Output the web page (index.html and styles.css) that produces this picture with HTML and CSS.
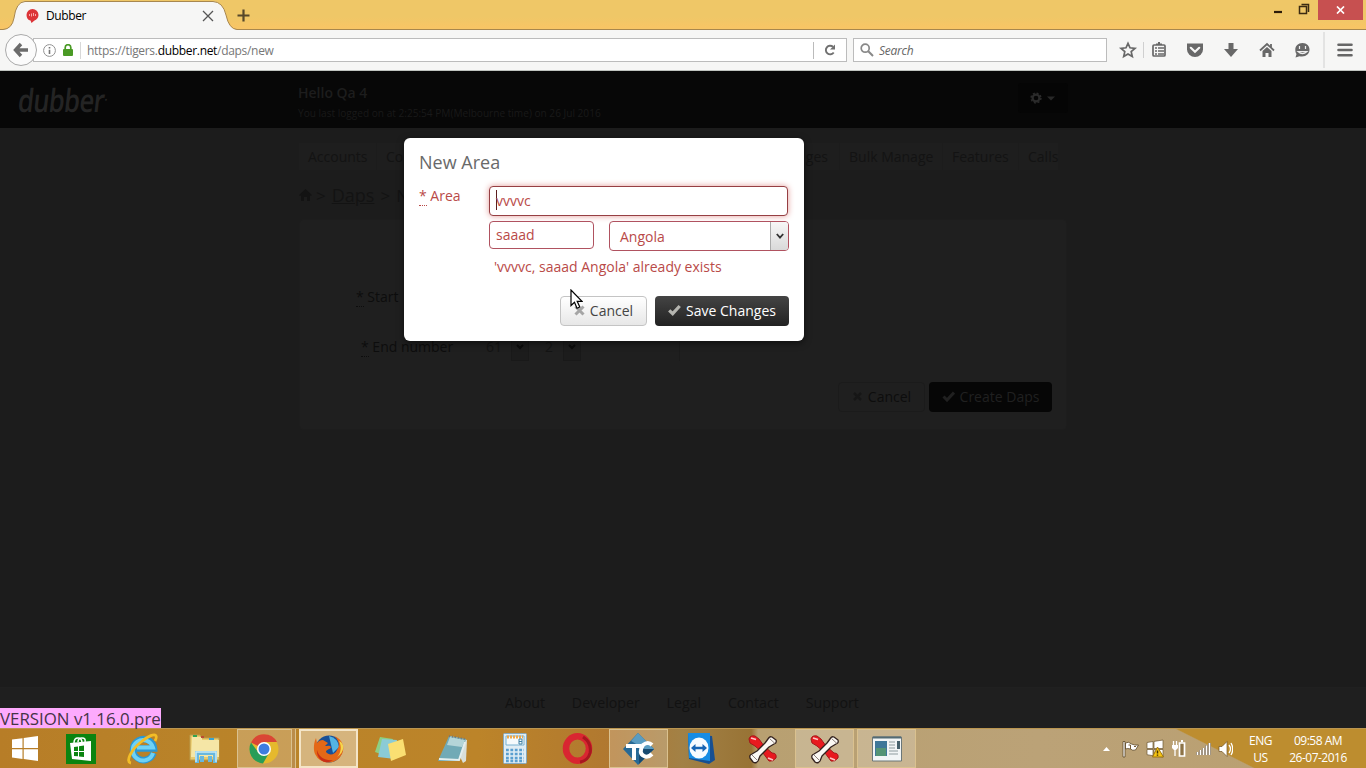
FILE: index.html
```html
<!DOCTYPE html>
<html lang="en">
<head>
<meta charset="utf-8">
<title>Dubber</title>
<link rel="stylesheet" href="styles.css">
</head>
<body>
<div class="screen">
  <header class="tabs">
    <svg class="tab-shape" width="260" height="31" viewBox="0 0 260 31"><path d="M0 29.5H3Q12 29 14 18Q16 2 25 1.500H213Q223 2 226 15Q229 29 237 29.500H260V31H0Z" fill="#f6f6f5"/><path d="M0 29.500H3Q12 29 14 18Q16 2 25 1.500H213Q223 2 226 15Q229 29 237 29.500H260" fill="none" stroke="#a8874e"/></svg>
    <div class="tab">
      <svg width="13" height="14" viewBox="0 0 13 14"><path d="M6.500 0a6 6 0 0 1 6 6c0 3-2 4.500-4 5.600L5.500 14 4.500 11.600C2 11 .5 9 .5 6a6 6 0 0 1 6-6Z" fill="#dc3438"/><path d="M3.500 5v2M5.500 4.500v3M7.500 4v3M9.500 5v2" stroke="#f9a9a9"/></svg>
      <span class="tab-title">Dubber</span>
      <svg class="tab-close" width="12" height="12" viewBox="0 0 12 12"><path d="M1 1l10 10M11 1L1 11" stroke="#555" stroke-width="1.300"/></svg>
      <svg class="tab-new" width="13" height="13" viewBox="0 0 13 13"><path d="M6.500 .5v12M.5 6.500h12" stroke="#57482a" stroke-width="2.200"/></svg>
    </div>
    <div class="window-controls">
      <svg width="36" height="20" viewBox="0 0 36 20"><path d="M0 12h8" stroke="#2c1b08" stroke-width="2.200"/><path d="M25.500 6.500h7v7h-7zM27.500 4.500h7V12" fill="none" stroke="#3b2b12" stroke-width="1.500"/></svg>
      <div class="close"><svg width="9" height="8" viewBox="0 0 9 8"><path d="M1 .5l7 7M8 .5l-7 7" stroke="#fff" stroke-width="1.700"/></svg></div>
    </div>
  </header>

  <div class="toolbar">
    <div class="back"><svg width="16" height="16" viewBox="0 0 16 16"><path d="M15 8H3M8 2L2.500 8 8 14" fill="none" stroke="#6b6b6b" stroke-width="3.400"/></svg></div>
    <div class="urlbar">
      <svg width="13" height="13" viewBox="0 0 13 13"><circle cx="6.500" cy="6.500" r="5.900" fill="none" stroke="#929292"/><path d="M6.500 5.700V10M6.500 3v1.500" stroke="#777" stroke-width="1.600"/></svg>
      <svg class="lock" width="10" height="12" viewBox="0 0 10 12"><path d="M2.200 6V3.500a2.800 2.800 0 0 1 5.600 0V6" fill="none" stroke="#4a9a25" stroke-width="1.700"/><rect y="5" width="10" height="7" rx="1" fill="#4a9a25"/></svg>
      <span class="url">https://tigers.<b>dubber.net</b>/daps/new</span>
      <div class="reload"><svg width="12" height="12" viewBox="0 0 12 12"><path d="M9.700 8.500A4.300 4.300 0 1 1 9 2.800" fill="none" stroke="#707070" stroke-width="1.900"/><path d="M11 .5v5H6z" fill="#707070"/></svg></div>
    </div>
    <div class="search">
      <svg width="14" height="14" viewBox="0 0 14 14"><circle cx="5.200" cy="5.200" r="4" fill="none" stroke="#888" stroke-width="1.700"/><path d="M8.300 8.300L13 13" stroke="#888" stroke-width="2"/></svg>
      <span>Search</span>
    </div>
    <svg class="tools" width="259" height="36" viewBox="1107 32 259 36">
      <path d="M1128 43.300l2 4.500 5 .5-3.800 3.300 1.100 4.900-4.300-2.600-4.300 2.600 1.100-4.900-3.800-3.300 5-.5z" fill="none" stroke="#686868" stroke-width="1.700"/>
      <path d="M1143.500 42v16M1324 32v36" stroke="#d0d0d0" fill="none"/>
      <rect x="1153" y="45" width="12" height="11" rx="1" fill="none" stroke="#686868" stroke-width="1.700"/><path d="M1156 45v-1.500h2V42h2v1.500h2V45" fill="#686868"/><path d="M1155 48h2m1 0h6M1155 51h2m1 0h6M1155 54h2m1 0h6" stroke="#686868" stroke-width="1.300"/>
      <path d="M1187 43.500h16v6a8 7.500 0 0 1-16 0z" fill="#686868"/><path d="M1190.800 47.800l4.200 4 4.200-4" fill="none" stroke="#f6f6f5" stroke-width="2.200" stroke-linecap="round"/>
      <path d="M1228.500 43h5v6h4.500l-7 8-7-8h4.500z" fill="#686868"/>
      <path d="M1260 50.500l7-6.500 7 6.500M1271 44v4" fill="none" stroke="#686868" stroke-width="1.800"/><path d="M1262.500 51l4.500-4 4.500 4v6h-3v-4h-3v4h-3z" fill="#686868"/>
      <path d="M1302.500 43c4.500 0 7 3.200 7 6.500 0 4-3 7-7.500 7-1 0-2 0-2.500-.2L1295.500 57.500l1-3.500c-1-1-1.200-3-1.200-4.500 0-3.300 2.700-6.500 7.200-6.500Z" fill="#686868"/><path d="M1299.500 46v3M1305.500 46v3M1298 51.500h9q-4.500 4-9 0z" fill="#686868" stroke="#eee" stroke-width="1.200"/>
      <path d="M1338.500 44.800h13M1338.500 50h13M1338.500 55.200h13" stroke="#666" stroke-width="2.600" stroke-linecap="round"/>
    </svg>
  </div>

  <main class="page">
    <div class="site-header">
      <div class="logo">dubber<small>·</small></div>
      <div class="welcome"><h4>Hello Qa 4</h4><p>You last logged on at 2:25:54 PM(Melbourne time) on 26 Jul 2016</p></div>
      <div class="gear"><svg width="27" height="12" viewBox="0 0 27 12"><circle cx="6" cy="6" r="3.400" fill="none" stroke="#2b2b2b" stroke-width="2.200"/><circle cx="6" cy="6" r="4.900" fill="none" stroke="#2b2b2b" stroke-width="1.500" stroke-dasharray="2 1.850"/><path d="M17 4.500h8l-4 4z" fill="#282828"/></svg></div>
    </div>
    <div class="content">
      <nav class="nav"><span class="n1">Accounts</span><span class="n2">Co</span><span class="n3">ges</span><span class="n4">Bulk Manage</span><span class="n5">Features</span><span class="n6">Calls</span></nav>
      <div class="crumbs"><svg width="13" height="12" viewBox="0 0 13 12"><path d="M0 6L6.500 0 13 6l-1 1-1-.8V12H8V8H5v4H2V6.200L1 7z" fill="#131313"/></svg><span>&gt;</span><u>Daps</u><span>&gt;</span><span>N</span></div>
      <section class="panel">
        <div class="row start"><label><abbr>*</abbr> Start</label></div>
        <div class="row end"><label><abbr>*</abbr> End number</label><div class="pick">61<i><svg width="8" height="6" viewBox="0 0 8 6"><path d="M1 1l3 3 3-3" fill="none" stroke="#0b0b0b" stroke-width="2"/></svg></i></div><div class="pick">2<i><svg width="8" height="6" viewBox="0 0 8 6"><path d="M1 1l3 3 3-3" fill="none" stroke="#0b0b0b" stroke-width="2"/></svg></i></div><div class="num"></div></div>
        <div class="panel-actions"><div class="btn ghost"><svg width="11" height="11" viewBox="0 0 11 11"><path d="M2 2l7 7M9 2l-7 7" stroke="#161616" stroke-width="2.500"/></svg>Cancel</div><div class="btn create"><svg width="13" height="11" viewBox="0 0 13 11"><path d="M1.500 5.500l3.500 3.500 7-7.500" fill="none" stroke="#202020" stroke-width="3"/></svg>Create Daps</div></div>
      </section>
    </div>
    <footer class="site-footer"><span>About</span><span>Developer</span><span>Legal</span><span>Contact</span><span>Support</span></footer>
    <div class="version">VERSION v1.16.0.pre</div>

    <div class="modal">
      <h3>New Area</h3>
      <div class="form">
        <label class="area-label"><abbr>*</abbr> Area</label>
        <div class="fields">
          <div class="input focus"><i class="caret"></i>vvvvc</div>
          <div class="pair"><div class="input city">saaad</div><div class="select"><span>Angola</span><div class="arrow"><svg width="8" height="7" viewBox="0 0 8 7"><path d="M.8 1L4 4.600 7.200 1" fill="none" stroke="#333" stroke-width="1.800"/></svg></div></div></div>
          <p class="error">'vvvvc, saaad Angola' already exists</p>
        </div>
      </div>
      <div class="actions">
        <div class="btn cancel"><svg width="11" height="11" viewBox="0 0 11 11"><path d="M1.500 1.500l8 8M9.500 1.500l-8 8" stroke="#a5a5a5" stroke-width="3"/></svg>Cancel</div>
        <div class="btn save"><svg width="13" height="12" viewBox="0 0 13 12"><path d="M1.200 6.300l3.500 3.400 7-7.700" fill="none" stroke="#b5b5b0" stroke-width="3.200"/></svg>Save Changes</div>
      </div>
    </div>
    <svg class="cursor" width="13" height="21" viewBox="0 0 13 21"><path d="M1 1v15.500l3.500-3.300 2.500 6 2.800-1.200-2.600-5.700H12z" fill="#fff" stroke="#000" stroke-width="1.200"/></svg>
  </main>

  <footer class="taskbar">
    <div class="startbtn"><svg width="28" height="26" viewBox="0 0 28 26"><path d="M1 3.500l10.500-1.300V12H1zM12.700 2L27 0v12H12.700zM1 13.200h10.500V23L1 21.500zM12.700 13.200H27V25l-14.300-1.900z" fill="#fff"/></svg></div>
    <div class="task"><svg width="30" height="30" viewBox="0 0 30 30"><path fill="#0b8410" d="M0 0h30v30H0z"/><path d="M4 9l21-2v20L6 25z" fill="#fff"/><path d="M8 9q0-5 4-5t4 5M12 8q0-4 4-4t3 4" stroke="#fff" fill="none" stroke-width="1.500"/><path d="M8 13l4-.5V17H8zM13 12.300l5-.7V17h-5zM8 18h4v4.300L8 22zM13 18h5v5l-5-.6z" fill="#0b8410"/></svg></div>
    <div class="task"><svg width="32" height="32" viewBox="0 0 32 32"><path d="M26.500 20A10.500 10.500 0 1 1 27 15.500H9" fill="none" stroke="#2b98d4" stroke-width="6.500"/><path d="M26 20A10.300 10.300 0 1 1 26 14.500H10" fill="none" stroke="#6fd2f5" stroke-width="4"/><path d="M4 30C-2 29 4 17 14 9c7-6 14-9 15-6 .7 1-.5 4-1 5" fill="none" stroke="#f3bd26" stroke-width="2.800"/></svg></div>
    <div class="task"><svg width="34" height="32" viewBox="0 0 34 32"><path d="M2 5V2h10l2 3h17v22H2z" fill="#eacb6b" stroke="#b99a4c"/><path d="M4 4h10v3h17v17H3z" fill="#f5e6a6"/><path d="M5 3h4" stroke="#31a450" stroke-width="2"/><path d="M13 4h3" stroke="#bd4b34" stroke-width="2"/><path d="M21 6h5" stroke="#3aa3d0" stroke-width="2"/><path d="M9 30V20h18v10M14 29v-6M22 29v-6" fill="none" stroke="#69b8de" stroke-width="4"/><path d="M8 29V19h20v10" fill="none" stroke="#c9eaf6" stroke-width="1.500"/></svg></div>
    <div class="task boxed chrome"><svg width="30" height="30" viewBox="0 0 30 30"><circle cx="15" cy="15" r="14.500" fill="#e5b92d"/><path d="M15 15L2 8.500A14.500 14.500 0 0 1 28 8H15z" fill="#da4635"/><path d="M2 8.500A14.500 14.500 0 0 0 14 29.500L20 19l-11-1z" fill="#289d58"/><circle cx="15" cy="15" r="7" fill="#fff"/><circle cx="15" cy="15" r="5.500" fill="#3e7de0"/></svg></div>
    <div class="task boxed firefox"><svg width="32" height="32" viewBox="0 0 32 32"><circle cx="16" cy="16" r="13.500" fill="#194f96"/><path d="M16 3q9 2 10 11l-6 6" fill="#53b4e4"/><path d="M3 5l1 5q2-3 6-3l5 3-3 3c2 0 5-1 6 1-1 3-5 2-5 5 3 4 9 3 11-2 4-5 1-11-3-14 9 3 11 12 8 18a15 15 0 0 1-27 0C0 16 1 9 3 5Z" fill="#e46817"/><path d="M26 8c3 6 2 12-2 16 8-5 8-14 2-16Z" fill="#f5d54d"/><path d="M4 17c2 8 9 11 16 10-8 6-17-1-16-10Z" fill="#c82e16"/></svg></div>
    <div class="task"><svg width="34" height="30" viewBox="0 0 34 30"><path d="M6 3l13 2-4 18-14-5z" fill="#8dcf84"/><path d="M8 5l15 1-2 19-17-2z" fill="#8bcbd5"/><path d="M14 10l15-5 3 16-15 6z" fill="#fadf72"/></svg></div>
    <div class="task"><svg width="34" height="30" viewBox="0 0 34 30"><path d="M14 2l17 4-1 21-3 2z" fill="#d9dfd9"/><path d="M13 2l17 3-7 22H2z" fill="#70aab6"/><path d="M14 3l15 3-3 7-15-2z" fill="#b4d5d8"/><path d="M3 25l20 1 6-18" stroke="#e3eeee" fill="none" stroke-width="2"/><path d="M13 2l16 3" stroke="#777" stroke-dasharray="1 2" stroke-width="2"/></svg></div>
    <div class="task"><svg width="24" height="31" viewBox="0 0 24 31"><rect x=".5" y=".5" width="23" height="30" rx="1" fill="#e0edf4" stroke="#86a9bd"/><path d="M3 3h18v9H3z" fill="#f5fafc" stroke="#79b2d2"/><path d="M4 4h16" stroke="#f1a847" stroke-width="3" stroke-dasharray="2 1"/><path d="M16 6h3v5h-3zM16 8.500h3" fill="none" stroke="#4182a6"/><path d="M3 17h18M3 21h18M3 25h18M3 28h18" stroke="#5a9fd0" stroke-width="2.300" stroke-dasharray="2.800 1.600"/></svg></div>
    <div class="task"><svg width="31" height="31" viewBox="0 0 31 31"><ellipse cx="15.500" cy="15.500" rx="11.500" ry="12.200" fill="none" stroke="#d92631" stroke-width="6.500"/><path d="M21 4q9 6 7 16-2 8-10 9" fill="none" stroke="#a8171f" stroke-width="3"/></svg></div>
    <div class="task boxed"><svg width="34" height="32" viewBox="0 0 34 32"><path d="M16 0l16 16-16 16L1 16z" fill="#276995"/><path d="M16 0l16 16h-9L9 8z" fill="#5a9cc1"/><path d="M17 16h15L17 31z" fill="#184a70"/><path d="M4 13h15M12 13v14" stroke="#fff" stroke-width="4"/><path d="M30 12q-4-4-9 0-5 8 1 11 4 2 8-2" fill="none" stroke="#fff" stroke-width="4"/></svg></div>
    <div class="task"><svg width="28" height="32" viewBox="0 0 28 32"><path d="M1 1l24 2 3 24-6 4-20-5z" fill="#174f92"/><path d="M1 0h22v28L2 25z" fill="#168ce3"/><ellipse cx="12" cy="15" rx="9.500" ry="10.500" fill="#f6fbff"/><path d="M4 15l4.500-4v2.700h7V11l4.500 4-4.500 4v-2.700h-7V19z" fill="#1764b4"/></svg></div>
    <div class="task"><svg width="30" height="30" viewBox="0 0 30 30"><g stroke-linejoin="round"><path d="M1 5q1-4 6-3l4 3 5 7 8 7q5 0 4 5-3 4-7 3l-6-8-8-7-5-3z" fill="#e8191f" stroke="#a5181a"/><path d="M3 4l5 1.500M20 24l5 2" stroke="#ffc3c3" stroke-width="1.800"/><path d="M20 5q1-3 4-2l4 3q1 3-2 4l-5 3-9 9-2 5q-2 3-5 1l-3-4q-1-3 2-4l5-3 8-8z" fill="#fbf8f4" stroke="#33221e" stroke-width="1.300"/><path d="M21.500 4.500l5.500 5M4 21l5 5" stroke="#8b7f79" fill="none"/></g></svg></div>
    <div class="task boxed"><svg width="30" height="30" viewBox="0 0 30 30"><g stroke-linejoin="round"><path d="M1 5q1-4 6-3l4 3 5 7 8 7q5 0 4 5-3 4-7 3l-6-8-8-7-5-3z" fill="#e8191f" stroke="#a5181a"/><path d="M3 4l5 1.500M20 24l5 2" stroke="#ffc3c3" stroke-width="1.800"/><path d="M20 5q1-3 4-2l4 3q1 3-2 4l-5 3-9 9-2 5q-2 3-5 1l-3-4q-1-3 2-4l5-3 8-8z" fill="#fbf8f4" stroke="#33221e" stroke-width="1.300"/><path d="M21.500 4.500l5.500 5M4 21l5 5" stroke="#8b7f79" fill="none"/></g></svg></div>
    <div class="task boxed"><svg width="30" height="26" viewBox="0 0 30 26"><path d="M.5 1h29v24H.5z" fill="#f2f5f6" stroke="#6b7779"/><path d="M1 1.500h28" stroke="#536a74" stroke-width="2"/><path d="M3 5h12v15H3z" fill="#3e7799"/><path d="M4 12h10v8H4z" fill="#549475"/><path d="M17 6h6M17 9h6M17 12h6M17 15h9M17 18h9" stroke="#8e9b9e"/><path d="M25 5h3v8h-3z" fill="#46606c"/></svg></div>
    <div class="tray">
      <svg width="132" height="20" viewBox="1101 739 132 20"><path d="M1103 751l3.500-4 3.500 4z" fill="#fff"/><g stroke="#5c4727" stroke-width=".8"><path d="M1123 741.500h2V757h-2zM1125.500 743q3-2 6 1 3 1.500 7 1l-3 5q-3 1-5-1-3-1-5 0z" fill="#fff"/></g><path d="M1128.500 745h2v4M1134 746.500h2" stroke="#755b36" fill="none"/><path d="M1147 742.500l6-1v7h-6zM1154 741.400l9-1.400v8.500h-9zM1147 749.500h6v6.200l-6-1zM1154 749.500h9v7.500l-9-1.200z" fill="#fff" stroke="#6b5632" stroke-width=".7"/><path d="M1157.500 747l6 10h-11z" fill="#f6c513" stroke="#9b7310"/><path d="M1157.500 750.500v3M1157.500 754.500v1.300" stroke="#443000" stroke-width="1.500"/><path d="M1179.500 743h5v13h-5z" fill="#8d7347" stroke="#fff" stroke-width="1.700"/><path d="M1181 741h2" stroke="#fff" stroke-width="2"/><path d="M1173.500 741v4M1176.500 741v4M1175 749v7" stroke="#fff" stroke-width="1.300"/><path d="M1172 745h6v3l-2 2h-2l-2-2z" fill="#fff"/><path d="M1197.500 752v3M1200.500 750v5M1203.500 748v7M1206.500 745.500v9.500M1209.500 743v12" stroke="#645034" stroke-width="3"/><path d="M1197.500 752v3M1200.500 750v5M1203.500 748v7M1206.500 745.500v9.500M1209.500 743v12" stroke="#fff" stroke-width="1.800"/><path d="M1219 746.500h3l5-5v15l-5-5h-3z" fill="#fff" stroke="#705325" stroke-width=".7"/><path d="M1229 745q3 4 0 8M1231 743q3.500 6 0 12" fill="none" stroke="#fff" stroke-width="1.300"/></svg>
      <div class="lang"><span>ENG</span><span>US</span></div>
      <div class="clock"><span>09:58 AM</span><span>26-07-2016</span></div>
    </div>
  </footer>
</div>
</body>
</html>
```
FILE: styles.css
```css
* { box-sizing: border-box; }
body { margin: 0; font-family: "Open Sans", sans-serif; }
h3, h4, p { margin: 0; font-weight: 400; }
svg { display: block; flex: none; }
.screen { width: 1366px; height: 768px; overflow: hidden; display: flex; flex-direction: column; }

.tabs { height: 30px; flex: none; display: flex; justify-content: space-between; position: relative; background: linear-gradient(#efc767 0 17px, #f8c565 27px); border-bottom: 1px solid #a8874e; }
.tab-shape { position: absolute; left: 0; top: 0; }
.tab { position: relative; display: flex; align-items: center; padding: 2px 0 0 26px; }
.tab-title { width: 155px; padding-left: 7px; font-size: 12px; letter-spacing: -.4px; }
.tab-close { margin-left: 8px; }
.tab-new { margin-left: 23px; }
.window-controls { display: flex; padding-right: 3px; gap: 8px; }
.close { width: 45px; height: 20px; background: #c75050; display: grid; place-items: center; }

.toolbar { height: 41px; flex: none; display: flex; align-items: center; background: #f6f6f5; border-bottom: 1px solid #bfc3bf; padding-left: 5px; font-size: 12px; }
.back { z-index: 1; width: 32px; height: 32px; border: 1px solid #aaa; border-radius: 50%; background: #fbfbfb; display: grid; place-items: center; }
.urlbar { width: 814px; height: 24px; margin-left: -4px; border: 1px solid #bcbcbc; background: #fff; display: flex; align-items: center; padding-left: 9px; }
.lock { margin-left: 7px; }
.url { margin-left: 7px; padding-left: 6px; border-left: 1px solid #d8d8d8; color: #777; letter-spacing: -.31px; white-space: nowrap; }
.url b { color: #000; font-weight: 400; }
.reload { margin-left: auto; width: 33px; height: 17px; border-left: 1px solid #bbb; display: grid; place-items: center; }
.search { width: 254px; height: 24px; margin-left: 6px; border: 1px solid #bcbcbc; background: #fff; display: flex; align-items: center; gap: 5px; padding-left: 6px; font-style: italic; color: #666; letter-spacing: -.25px; }

.page { position: relative; flex: 1; min-height: 0; display: flex; flex-direction: column; background: #1c1c1c; }
.site-header { height: 57px; flex: none; display: flex; background: #070707; }
.logo { width: 298px; padding: 3px 0 0 17px; font: 600 32px/50px "Open Sans", sans-serif; color: #242424; transform: scaleX(.8) skewX(-8deg); transform-origin: 17px 40px; letter-spacing: -.8px; }
.logo small { font-size: 15px; vertical-align: 7px; }
.welcome { width: 720px; color: #191919; }
.welcome h4 { font-size: 14px; font-weight: 600; line-height: 20px; padding-top: 12px; color: #1d1d1d; }
.welcome p { font-size: 10.100px; line-height: 21px; }
.gear { width: 50px; height: 30px; margin-top: 12px; padding: 9px 0 0 12px; background: #050505; border-radius: 3px; }
.content { width: 770px; margin-left: 299px; flex: 1; font-size: 14px; color: #0d0d0d; }
.nav { width: 760px; height: 27px; margin-top: 15px; display: flex; background: #1e1e1e; line-height: 27px; color: #131313; }
.nav span { padding-left: 9px; border-right: 1px solid #1c1c1c; white-space: nowrap; }
.n1 { width: 78px; } .n2 { width: 342px; } .n4 { width: 103px; } .n5 { width: 76px; } .n6 { width: 40px; }
.nav .n3 { width: 121px; text-align: right; padding-right: 11px; }
.crumbs { display: flex; align-items: center; gap: 6px; font-size: 17px; height: 30px; margin-top: 10px; color: #131313; }
.crumbs svg { margin-right: -2px; }
.crumbs u { font-size: 18px; }
.panel { width: 768px; height: 211px; margin-top: 9px; background: #1f1f1f; border: 1px solid #1d1d1d; border-radius: 4px; padding-top: 63px; display: flex; flex-direction: column; }
.row { height: 28px; line-height: 28px; display: flex; }
.start { padding-left: 56px; }
.end { padding-left: 61px; margin-top: 22px; }
abbr { border-bottom: 1px dotted currentColor; display: inline-block; line-height: 18px; }
.end label { width: 125px; }
.pick { width: 43px; margin-right: 9px; display: flex; justify-content: space-between; color: #141414; }
.pick:nth-of-type(2) { padding-left: 7px; }
.pick i { width: 18px; border: 1px solid #191919; background: #1c1c1c; display: grid; place-items: center; }
.num { width: 90px; border-right: 1px solid #1b1b1b; }
.panel-actions { display: flex; justify-content: flex-end; gap: 4px; padding: 21px 14px 0 0; }
.btn { height: 30px; display: flex; align-items: center; justify-content: center; gap: 5px; border-radius: 4px; font-size: 14px; white-space: nowrap; padding-bottom: 2px; }
.ghost { width: 87px; border: 1px solid #1b1b1b; }
.create { width: 123px; background: #060606; color: #202020; }
.site-footer { height: 41px; flex: none; background: #1f1f1f; border-top: 1px solid #202020; display: flex; justify-content: center; gap: 26.800px; padding: 5px 2px 0 0; font-size: 14.200px; color: #121212; }
.version { position: absolute; left: 0; bottom: 0; width: 161px; height: 20px; background: #fdaafd; color: #453346; font-size: 16.850px; line-height: 22px; white-space: nowrap; }

.modal { position: absolute; left: 404px; top: 67px; width: 400px; height: 203px; background: #fff; border-radius: 6px; padding: 13px 15px; box-shadow: 0 2px 7px #0008; color: #b94a48; font-size: 14px; display: flex; flex-direction: column; }
.modal h3 { color: #696969; font-size: 18px; line-height: 22px; }
.form { display: flex; margin-top: 13px; }
.area-label { width: 70px; line-height: 20px; }
.fields { width: 300px; flex: none; }
.input, .select { border: 1px solid #b05260; border-radius: 4px; background: #fff; display: flex; align-items: center; padding-left: 6px; }
.input { padding-bottom: 2px; }
.focus { width: 299px; height: 30px; border-color: #963f43; box-shadow: 0 0 6px #e39b98; }
.caret { width: 1px; height: 20px; background: #5c1e1e; margin-right: -1px; }
.pair { display: flex; align-items: flex-start; gap: 15px; margin-top: 5px; }
.city { width: 105px; height: 28px; }
.select { width: 180px; height: 30px; padding-left: 10px; justify-content: space-between; overflow: hidden; }
.arrow { width: 18px; height: 28px; border-left: 1px solid #aaa; background: linear-gradient(#f7f7f7, #d9d9d9); display: grid; place-items: center; }
.error { line-height: 20px; padding: 6px 0 0 5px; }
.actions { display: flex; justify-content: flex-end; gap: 8px; margin-top: auto; padding-bottom: 2px; }
.cancel { width: 87px; color: #444; border: 1px solid #c4c4c4; background: linear-gradient(#fff, #e7e7e7); }
.save { width: 134px; color: #fff; background: linear-gradient(#444, #222); }
.cursor { position: absolute; left: 570px; top: 218px; }

.taskbar { height: 40px; flex: none; display: flex; background: linear-gradient(26.600deg, transparent 30.500%, #bd8d2f 31.500%) right top / 195px 40px no-repeat, linear-gradient(90deg, #b77d27, #b98329 15%, #bc8429 35%, #b07830 45%, #a28146 50%, #987335 55%, #b8a071 55.500%, #bba277 76%, #b99f70 100%); border-top: 1px solid #ba9550; }
.startbtn { width: 50px; display: grid; place-items: center; }
.task { width: 62px; display: grid; place-items: center; border: 1px solid transparent; background-clip: padding-box; }
.boxed { width: 59px; margin: 0 2px 0 1px; border-color: #dac18f; background-color: #ffffff38; }
.chrome { width: 55px; margin: 0 6px 0 1px; padding-right: 1px; box-shadow: 3px 0 #ba8c4a, 4px 0 #dac18f; }
.firefox { border: 2px solid #f4e5c8; background-color: #ffffff65; }
.tray { margin-left: auto; display: flex; align-items: center; color: #fff; font-size: 12px; letter-spacing: -.5px; white-space: nowrap; }
.tray div { display: flex; flex-direction: column; text-align: center; line-height: 17px; }
.lang { width: 55px; }
.clock { width: 60px; margin-right: 18px; }
```
